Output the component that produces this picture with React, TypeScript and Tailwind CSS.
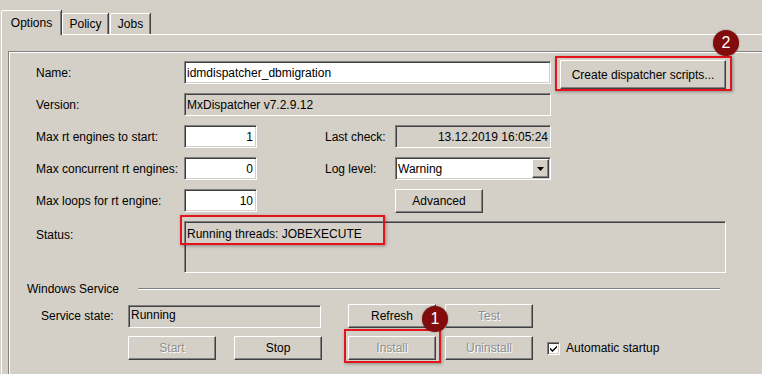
import React from 'react';

const sunken =
  'border border-t-[#808080] border-l-[#808080] border-b-white border-r-white shadow-[inset_1px_1px_0_#404040,inset_-1px_-1px_0_#d4d0c8]';
const raised =
  'border border-t-white border-l-white border-b-[#404040] border-r-[#404040] shadow-[inset_-1px_-1px_0_#808080,inset_1px_1px_0_#d4d0c8] bg-[#d4d0c8] flex items-center justify-center';
const disabledText = 'text-[#8f8f8f] [text-shadow:1px_1px_0_#ffffff]';
const callout = 'absolute border-2 border-[#e3141b] shadow-[1px_1px_3px_rgba(0,0,0,0.35)] pointer-events-none';
const badge =
  'absolute w-[26px] h-[26px] rounded-full bg-[#820b0b] text-white text-[16px] leading-[26px] text-center shadow-[0_0_2px_rgba(0,0,0,0.4)]';

const Win98Button = ({ label, className = '', disabled = false }: { label: string; className?: string; disabled?: boolean }) => (
  <div className={`${raised} ${className}`}>
    <span className={disabled ? disabledText : ''}>{label}</span>
  </div>
);

export default function App() {
  return (
    <div className="relative w-[762px] h-[374px] overflow-hidden bg-[#d4d0c8] text-black text-[12px] leading-[14px] font-['Liberation_Sans',Arial,sans-serif]">
      {/* Tabs */}
      <div className="flex items-end h-[34px] pl-[1px]">
        <div className="relative z-10 -mb-[1px] h-[25px] w-[60px] bg-[#d4d0c8] border-l border-t border-white rounded-tl-[2px] shadow-[inset_-1px_0_0_#808080,1px_0_0_#404040] flex items-center justify-center">
          Options
        </div>
        <div className="h-[21px] w-[46px] ml-[1px] border-t border-l border-white rounded-tl-[2px] shadow-[inset_-1px_0_0_#808080,1px_0_0_#404040] flex items-center justify-center">
          Policy
        </div>
        <div className="h-[21px] w-[40px] ml-[2px] border-t border-l border-white rounded-tl-[2px] shadow-[inset_-1px_0_0_#808080,1px_0_0_#404040] flex items-center justify-center">
          Jobs
        </div>
      </div>

      {/* Tab panel */}
      <div className="ml-[1px] border-t border-l border-white h-[340px] pl-[6px] pt-[16px]">
        {/* Group box */}
        <div className="w-[800px] h-[400px] border border-[#808080] shadow-[inset_1px_1px_0_#ffffff]">
          {/* Name */}
          <div className="flex items-center h-[23px] mt-[9px] pl-[27px]">
            <span className="w-[148px]">Name:</span>
            <div className={`${sunken} w-[367px] h-[23px] bg-white flex items-center pl-[2px]`}>idmdispatcher_dbmigration</div>
            <Win98Button label="Create dispatcher scripts..." className="ml-[9px] w-[166px] h-[29px] self-start -mt-[1px]" />
          </div>

          {/* Version */}
          <div className="flex items-center h-[23px] mt-[9px] pl-[27px]">
            <span className="w-[148px]">Version:</span>
            <div className={`${sunken} w-[367px] h-[23px] flex items-center pl-[2px]`}>MxDispatcher v7.2.9.12</div>
          </div>

          {/* Max rt engines / Last check */}
          <div className="flex items-center h-[23px] mt-[9px] pl-[27px]">
            <span className="w-[148px]">Max rt engines to start:</span>
            <div className={`${sunken} w-[73px] h-[23px] bg-white flex items-center justify-end pr-[3px]`}>1</div>
            <span className="ml-[68px] w-[70px]">Last check:</span>
            <div className={`${sunken} w-[156px] h-[23px] flex items-center justify-end pr-[2px]`}>13.12.2019 16:05:24</div>
          </div>

          {/* Max concurrent / Log level */}
          <div className="flex items-center h-[23px] mt-[9px] pl-[27px]">
            <span className="w-[148px]">Max concurrent rt engines:</span>
            <div className={`${sunken} w-[73px] h-[23px] bg-white flex items-center justify-end pr-[3px]`}>0</div>
            <span className="ml-[68px] w-[70px]">Log level:</span>
            <div className={`${sunken} w-[156px] h-[23px] bg-white flex items-center pl-[2px] pr-[1px]`}>
              <span className="flex-1">Warning</span>
              <div className={`${raised} w-[17px] h-[19px]`}>
                <svg width="7" height="4" viewBox="0 0 7 4">
                  <path d="M0 0h7L3.5 4z" fill="#000" />
                </svg>
              </div>
            </div>
          </div>

          {/* Max loops / Advanced */}
          <div className="flex items-center h-[23px] mt-[9px] pl-[27px]">
            <span className="w-[148px]">Max loops for rt engine:</span>
            <div className={`${sunken} w-[73px] h-[23px] bg-white flex items-center justify-end pr-[3px]`}>10</div>
            <Win98Button label="Advanced" className="ml-[138px] w-[88px] h-[24px]" />
          </div>

          {/* Status */}
          <div className="flex items-start h-[52px] mt-[9px] pl-[27px]">
            <span className="w-[148px] pt-[7px]">Status:</span>
            <div className={`${sunken} w-[542px] h-[52px] pl-[2px] pt-[5px]`}>Running threads: JOBEXECUTE</div>
          </div>

          {/* Windows Service */}
          <div className="flex items-center h-[14px] mt-[9px] pl-[18px]">
            <span className="w-[111px]">Windows Service</span>
            <div className="w-[582px] h-[2px] border-t border-[#808080] border-b border-b-white" />
          </div>

          <div className="flex items-center h-[24px] mt-[8px] pl-[32px]">
            <span className="w-[87px]">Service state:</span>
            <div className={`${sunken} w-[193px] h-[23px] pl-[2px] pt-[2px]`}>Running</div>
            <Win98Button label="Refresh" className="ml-[27px] w-[88px] h-[24px]" />
            <Win98Button label="Test" disabled className="ml-[9px] w-[88px] h-[24px]" />
          </div>

          <div className="flex items-center h-[24px] mt-[8px] pl-[119px]">
            <Win98Button label="Start" disabled className="w-[88px] h-[24px]" />
            <Win98Button label="Stop" className="ml-[18px] w-[88px] h-[24px]" />
            <Win98Button label="Install" disabled className="ml-[26px] w-[88px] h-[24px]" />
            <Win98Button label="Uninstall" disabled className="ml-[9px] w-[88px] h-[24px]" />
            <div className={`${sunken} ml-[14px] w-[13px] h-[13px] bg-white flex items-center justify-center`}>
              <svg width="7" height="7" viewBox="0 0 7 7">
                <path d="M0 2.5l2.5 2.5L7 0.5v2L2.5 7 0 4.5z" fill="#000" />
              </svg>
            </div>
            <span className="ml-[6px]">Automatic startup</span>
          </div>
        </div>
      </div>

      {/* Callouts */}
      <div className={`${callout} left-[555px] top-[56px] w-[177px] h-[35px]`} />
      <div className={`${callout} left-[180px] top-[215px] w-[205px] h-[30px]`} />
      <div className={`${callout} left-[344px] top-[329px] w-[97px] h-[34px]`} />
      <div className={`${badge} left-[713px] top-[30px]`}>2</div>
      <div className={`${badge} left-[422px] top-[306px]`}>1</div>
    </div>
  );
}
